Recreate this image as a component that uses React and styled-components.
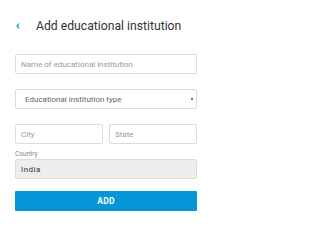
import styled, { createGlobalStyle } from "styled-components";

const Global = createGlobalStyle`
  html, body {
    margin: 0;
    padding: 0;
    background: #fff;
  }
  body {
    font-family: Roboto, "Liberation Sans", sans-serif;
  }
`;

const Page = styled.div`
  width: 182px;
  padding: 20px 17px 0 15px;
  display: flex;
  flex-direction: column;
`;

const Header = styled.div`
  display: flex;
  align-items: center;
  height: 12px;
  margin-bottom: 22px;
`;

const Back = styled.svg`
  width: 4px;
  height: 6px;
  margin-left: 1px;
  margin-right: 16px;
`;

const Title = styled.h1`
  margin: 0;
  font-size: 12.2px;
  font-weight: 400;
  color: #333;
  white-space: nowrap;
`;

const Form = styled.form`
  display: flex;
  flex-direction: column;
`;

const Field = styled.input`
  display: block;
  box-sizing: border-box;
  width: 100%;
  min-width: 0;
  height: 20px;
  margin: 0;
  padding: 0 5px;
  border: 1px solid #dcdcdc;
  border-radius: 2px;
  background: ${(p) => (p.readOnly ? "#eeeeee" : "#fff")};
  font-family: inherit;
  font-size: 8px;
  letter-spacing: ${(p) => (p.readOnly ? "0.5px" : "0")};
  color: #333;
  outline: none;

  &::placeholder {
    color: #9a9a9a;
  }
`;

const Row = styled.div`
  display: flex;
  gap: 6px;
  margin-top: ${(p) => p.$top || 0}px;
`;

const SelectBox = styled.div`
  position: relative;
  margin-top: 15px;
`;

const Select = styled.select`
  display: block;
  box-sizing: border-box;
  width: 100%;
  height: 20px;
  margin: 0;
  padding: 0 9px;
  border: 1px solid #dcdcdc;
  border-radius: 2px;
  background: #fff;
  appearance: none;
  font-family: inherit;
  font-size: 8px;
  color: #666;
  outline: none;
`;

const Arrow = styled.span`
  position: absolute;
  right: 4px;
  top: 9px;
  width: 0;
  height: 0;
  border-left: 1.5px solid transparent;
  border-right: 1.5px solid transparent;
  border-top: 3px solid #333;
  pointer-events: none;
`;

const Label = styled.label`
  display: block;
  margin-top: 5px;
  height: 10px;
  font-size: 6.5px;
  line-height: 10px;
  color: #888;
`;

const Button = styled.button`
  height: 20px;
  margin-top: 12px;
  border: none;
  border-radius: 1px;
  background: #0696d7;
  color: #fff;
  font-family: inherit;
  font-size: 8.5px;
  font-weight: 700;
  letter-spacing: 0.2px;
  cursor: pointer;
`;

export default function App() {
  return (
    <Page>
      <Global />
      <Header>
        <Back viewBox="0 0 4 6">
          <path d="M3.3 0.6 L1 3 L3.3 5.4" fill="none" stroke="#0696d7" strokeWidth="1.2" />
        </Back>
        <Title>Add educational institution</Title>
      </Header>
      <Form onSubmit={(e) => e.preventDefault()}>
        <Field placeholder="Name of educational institution" />
        <SelectBox>
          <Select defaultValue="">
            <option value="">Educational institution type</option>
          </Select>
          <Arrow />
        </SelectBox>
        <Row $top={15}>
          <Field placeholder="City" />
          <Field placeholder="State" />
        </Row>
        <Label>Country</Label>
        <Field readOnly value="India" />
        <Button type="submit">ADD</Button>
      </Form>
    </Page>
  );
}
